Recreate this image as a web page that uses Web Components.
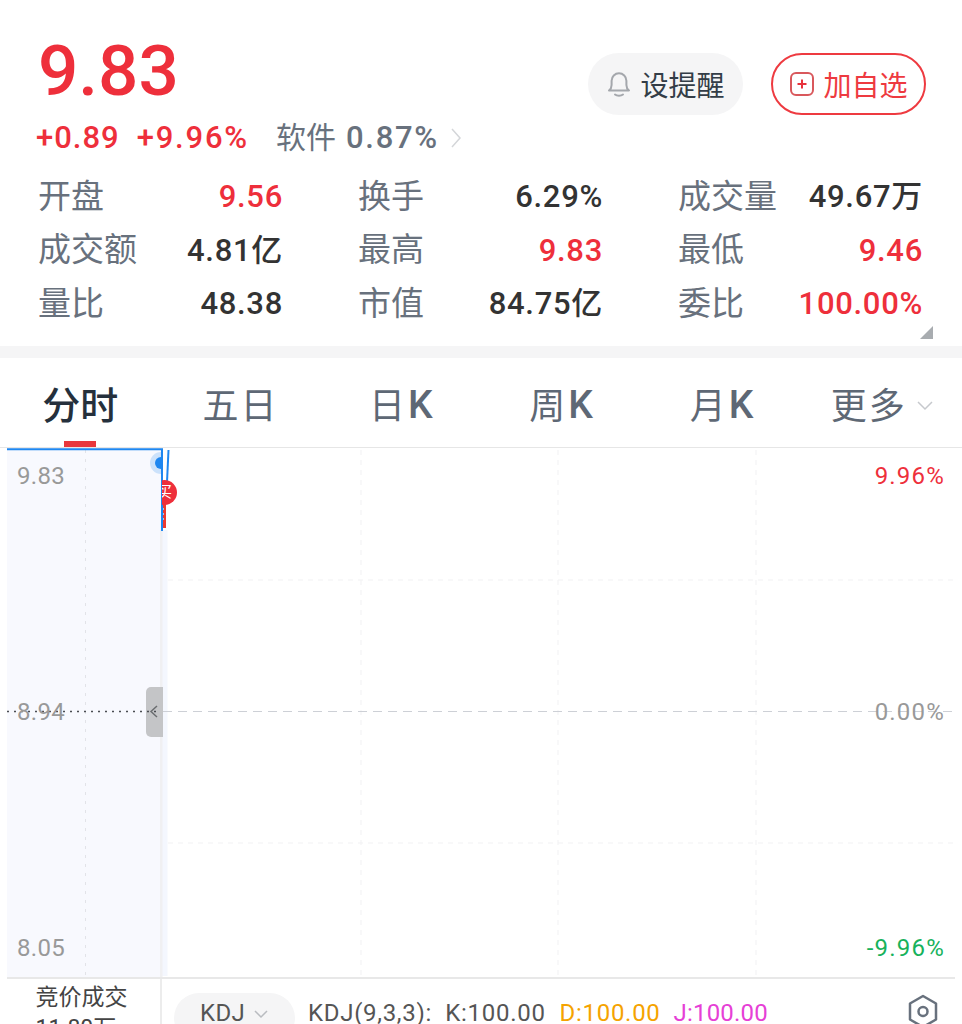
<!DOCTYPE html>
<html lang="zh">
<head>
<meta charset="utf-8">
<style>
  html, body { margin: 0; height: 1024px; overflow: hidden; background: #fff; }
  body { font-family: Roboto, "Noto Sans CJK SC", sans-serif; }
  quote-header, period-tabs, time-chart, indicator-bar { display: block; }
</style>
</head>
<body>
<quote-header>
  <pill-button slot="actions" kind="plain">
    <svg slot="icon" width="26" height="28" viewBox="0 0 26 28" fill="none" stroke="#a4a7ac" stroke-width="2"><path d="M3 20.500c2-1.600 2.600-3.200 2.600-5.500v-4.300a7.400 7.400 0 0 1 14.800 0V15c0 2.300.6 3.900 2.600 5.500z" stroke-linejoin="round"/><path d="M9 24.500c2 1.500 6 1.500 8 0" stroke-linecap="round"/></svg>
    设提醒
  </pill-button>
  <pill-button slot="actions" kind="outline">
    <svg slot="icon" width="26" height="26" viewBox="0 0 26 26" fill="none" stroke="#d9585c" stroke-width="2"><rect x="2" y="2" width="22" height="22" rx="5"/><path d="M13 8.500v9M8.500 13h9" stroke="#e8323c"/></svg>
    加自选
  </pill-button>
  <stat-cell label="开盘" value="9.56" tone="up"></stat-cell>
  <stat-cell label="换手" value="6.29%"></stat-cell>
  <stat-cell label="成交量" value="49.67万"></stat-cell>
  <stat-cell label="成交额" value="4.81亿"></stat-cell>
  <stat-cell label="最高" value="9.83" tone="up"></stat-cell>
  <stat-cell label="最低" value="9.46" tone="up"></stat-cell>
  <stat-cell label="量比" value="48.38"></stat-cell>
  <stat-cell label="市值" value="84.75亿"></stat-cell>
  <stat-cell label="委比" value="100.00%" tone="up"></stat-cell>
</quote-header>
<period-tabs></period-tabs>
<time-chart></time-chart>
<indicator-bar></indicator-bar>

<script>
  const define = (name, css, html, extra) => {
    customElements.define(name, class extends HTMLElement {
      constructor() {
        super();
        this.attachShadow({mode: 'open'}).innerHTML = `<style>${css}</style>${html}`;
      }
      connectedCallback() {
        if (extra) extra.call(this);
      }
    });
  };

  define('pill-button', `
    :host { display: flex; align-items: center; justify-content: center; gap: 8px; box-sizing: border-box;
      width: 155px; height: 62px; border-radius: 31px; font-size: 28px; }
    :host([kind=plain]) { background: #f5f5f6; color: #333d47; }
    :host([kind=outline]) { border: 2px solid #ee3a40; color: #ee3a40; }
    ::slotted(svg) { flex: none; }
  `, `<slot name="icon"></slot><span><slot></slot></span>`);

  define('stat-cell', `
    :host { display: flex; justify-content: space-between; align-items: center; height: 53.500px; }
    .k { font-size: 33px; line-height: 44px; color: #68717d; }
    .v { font-size: 31px; line-height: 44px; margin-top: 1px; font-weight: 500; color: #333; letter-spacing: .7px; }
    :host([tone=up]) .v { color: #ee2f3b; }
  `, `<span class="k"></span><span class="v"></span>`, function () {
    this.shadowRoot.querySelector('.k').textContent = this.getAttribute('label');
    this.shadowRoot.querySelector('.v').textContent = this.getAttribute('value');
  });

  define('quote-header', `
    :host { position: relative; height: 346px; box-sizing: border-box; padding: 26px 39px 0 38px; }
    .top { display: flex; justify-content: space-between; }
    .price { font-size: 71px; line-height: 90px; font-weight: 500; color: #ee2f3b; }
    .actions { display: flex; gap: 28px; margin-top: 27px; margin-right: -3px; }
    .change { display: flex; align-items: center; height: 40px; margin: 2px 0 0 -2px; font-size: 31px; line-height: 40px; font-weight: 500; color: #ee2f3b; }
    .change span { letter-spacing: 1px; }
    .change .pct { margin-left: 17px; letter-spacing: 1.800px; }
    .change .ind { margin-left: 27px; color: #68717d; letter-spacing: 1.700px; }
    .change .ind i { font-style: normal; font-size: 30px; font-weight: 400; letter-spacing: 0; margin-right: 10px; }
    .change svg { margin-left: 12px; }
    .grid { display: grid; grid-template-columns: repeat(3, 1fr); column-gap: 75px; margin-top: 12px; }
    .corner { position: absolute; right: 29px; bottom: 7px; width: 0; height: 0;
      border-style: solid; border-width: 0 0 13px 13px; border-color: transparent transparent #a8acb0 transparent; }
  `, `
    <div class="top">
      <div class="price">9.83</div>
      <div class="actions"><slot name="actions"></slot></div>
    </div>
    <div class="change">
      <span>+0.89</span><span class="pct">+9.96%</span><span class="ind"><i>软件</i>0.87%</span>
      <svg width="10" height="20" viewBox="0 0 10 20" fill="none" stroke="#d4d6d9" stroke-width="1.500"><path d="M1 1l8 9-8 9"/></svg>
    </div>
    <div class="grid"><slot></slot></div>
    <div class="corner"></div>
  `);

  define('period-tabs', `
    :host { border-top: 12px solid #f5f5f6; background: #fff; }
    .row { display: grid; grid-template-columns: repeat(6, 1fr); height: 89px; border-bottom: 1px solid #e6e6e6; }
    .tab { position: relative; display: flex; align-items: center; justify-content: center;
      font-size: 36px; letter-spacing: 2px; color: #5e6875; }
    .tab b { font-weight: 500; font-size: 39px; line-height: 46px; letter-spacing: 0; margin: 4px 0 0 1px; }
    .tab.on { color: #25303c; font-weight: 500; font-size: 38px; letter-spacing: 0; }
    .tab.on::after { content: ""; position: absolute; left: 50%; margin-left: -16px; bottom: 0; width: 32px; height: 6px; background: #e8373c; }
    .tab svg { margin-left: 10px; margin-top: 6px; }
  `, `
    <div class="row">
      <div class="tab on">分时</div>
      <div class="tab">五日</div>
      <div class="tab">日<b>K</b></div>
      <div class="tab">周<b>K</b></div>
      <div class="tab">月<b>K</b></div>
      <div class="tab">更多<svg width="16" height="10" viewBox="0 0 16 10" fill="none" stroke="#c6c9cd" stroke-width="1.500"><path d="M1 1l7 7 7-7"/></svg></div>
    </div>
  `);

  define('time-chart', `
    :host { position: relative; height: 529px; overflow: hidden; }
    svg { position: absolute; left: 0; top: 0; }
    .lab { position: absolute; font-size: 24px; line-height: 28px; color: #999; letter-spacing: .3px; }
    .l { left: 17px; }
    .r { right: 17px; letter-spacing: 1.200px; }
    .up { color: #ee2f3b; }
    .down { color: #17b25c; }
    .handle { position: absolute; left: 146px; top: 239px; width: 17px; height: 50px; background: #c4c5c7; border-radius: 5px 0 0 5px; }
    .buy { position: absolute; left: 152px; top: 32px; width: 25px; height: 25px; border-radius: 50%; background: #ee2f3b;
      color: #fff; font-size: 15px; line-height: 25px; text-align: center; clip-path: inset(0 0 0 10px); }
  `, `
    <svg width="962" height="529" viewBox="0 448 962 529">
      <rect x="7" y="448" width="154" height="529" fill="#f8f9fe"/>
      <rect x="162" y="530" width="5.500" height="446" fill="#f4f7fe"/>
      <rect x="160" y="530" width="2.500" height="447" fill="#f0f0f2"/>
      <g stroke="#f1f1f3" stroke-width="1" stroke-dasharray="5 5" fill="none">
        <path d="M361 450V977M558 450V977M756 450V977"/>
        <path d="M168 580H955M168 843H955"/>
      </g>
      <path d="M85.500 450V977" stroke="#e2e3e8" stroke-dasharray="3 6"/>
      <path d="M163 711.500H955" stroke="#cdd0d6" stroke-width="1" stroke-dasharray="9 6"/>
      <circle cx="161" cy="463" r="11" fill="#1f87f0" opacity=".2" clip-path="inset(0 50% 0 0)"/>
      <circle cx="161" cy="463" r="6" fill="#1f87f0" clip-path="inset(0 50% 0 0)"/>
      <path d="M7 449.300H162V531" fill="none" stroke="#1f87f0" stroke-width="2"/>
      <path d="M168.500 450L167 482" stroke="#1f87f0" stroke-width="2"/>
      <path d="M164.500 503V528" stroke="#ee3a30" stroke-width="3"/>
      <path d="M163.500 503V522" stroke="#9ec8f5" stroke-width="1" stroke-dasharray="2 3"/>
    </svg>
    <div class="handle"></div>
    <svg width="962" height="529" viewBox="0 448 962 529">
      <path d="M157 706l-6 5.500 6 5.500" fill="none" stroke="#6a6d70" stroke-width="1.500"/>
      <path d="M7 711.500H161" stroke="#4a4d52" stroke-width="1.500" stroke-dasharray="2 5"/>
    </svg>
    <div class="buy">买</div>
    <span class="lab l" style="top:14px">9.83</span>
    <span class="lab l" style="top:250px">8.94</span>
    <span class="lab l" style="top:486px">8.05</span>
    <span class="lab r up" style="top:14px">9.96%</span>
    <span class="lab r" style="top:250px">0.00%</span>
    <span class="lab r down" style="top:486px">-9.96%</span>
  `);

  define('indicator-bar', `
    :host { height: 47px; overflow: hidden; margin: 0 7px; border-top: 2px solid #e8e8e8; box-sizing: border-box; }
    .row { display: flex; height: 60px; }
    .auction { width: 155px; flex: none; box-sizing: border-box; border-right: 2px solid #ececec; padding: 3px 0 0 28.500px; font-size: 23px; line-height: 31px; color: #444; white-space: nowrap; }
    .pill { display: flex; align-items: flex-start; gap: 9px; box-sizing: border-box; width: 121px; height: 50px; margin: 14px 0 0 12px;
      padding: 5px 0 0 26px; border-radius: 25px; background: #f5f5f6; font-size: 24px; line-height: 30px; color: #555; letter-spacing: .4px; }
    .pill svg { margin-top: 12px; }
    .vals { display: flex; margin: 18px 0 0 13px; font-size: 24px; line-height: 32px; color: #555; white-space: pre; letter-spacing: .7px; }
    .d { color: #f5a300; margin-left: 14px; }
    .j { color: #e63fd6; margin-left: 13px; letter-spacing: .2px; }
    .gear { margin: 15px 16px 0 auto; }
  `, `
    <div class="row">
      <div class="auction">竞价成交<br>11.80万</div>
      <div class="pill">KDJ<svg width="14" height="9" viewBox="0 0 14 9" fill="none" stroke="#b9bcc0" stroke-width="1.500"><path d="M1 1l6 6 6-6"/></svg></div>
      <div class="vals"><span>KDJ(9,3,3):  K:100.00</span><span class="d">D:100.00</span><span class="j">J:100.00</span></div>
      <svg class="gear" width="32" height="36" viewBox="0 0 32 36" fill="none" stroke="#68717d" stroke-width="2.500"><path d="M16 2l13 7.500v16L16 33 3 25.500v-16z" stroke-linejoin="round"/><circle cx="16" cy="17.500" r="4.500"/></svg>
    </div>
  `);
</script>
</body>
</html>
